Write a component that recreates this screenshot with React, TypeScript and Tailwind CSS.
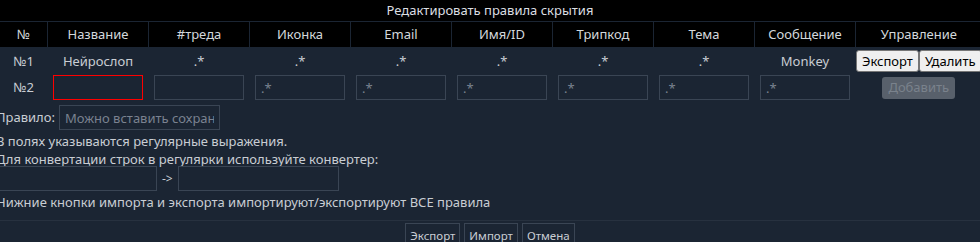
import React from "react";

const columns = ["Название", "#треда", "Иконка", "Email", "Имя/ID", "Трипкод", "Тема", "Сообщение"];

const savedRule = ["Нейрослоп", ".*", ".*", ".*", ".*", ".*", ".*", "Monkey"];

const newRule = ["", "", ".*", ".*", ".*", ".*", ".*", ".*"];

const font = { fontFamily: '"Noto Sans", "Open Sans", sans-serif' };

const inputGrey =
  "h-[25px] w-[90px] border border-solid border-[#3a4554] bg-transparent px-[5px] text-[13px] text-[#c9cdd3] placeholder:text-[#7a8290] outline-none";
const inputRed =
  "h-[25px] w-[90px] border border-solid border-[#ff0000] bg-transparent px-[5px] text-[13px] text-[#c9cdd3] placeholder:text-[#7a8290] outline-none";

const App = () => {
  return (
    <div
      className="h-[242px] w-[980px] overflow-hidden bg-[#1b2533] text-[13px] leading-[17px] text-[#c9cdd3]"
      style={font}
    >
      <div className="flex h-[21px] items-center justify-center bg-black text-[13px] text-[#dcdfe3]">
        Редактировать правила скрытия
      </div>

      <div className="mt-px grid grid-cols-[47px_repeat(8,100px)_1fr] gap-x-px">
        <div className="flex h-[25px] items-center justify-center bg-black text-[#d4d8dc]">№</div>
        {columns.map((c) => (
          <div key={c} className="flex h-[25px] items-center justify-center bg-black text-[#d4d8dc]">
            {c}
          </div>
        ))}
        <div className="flex h-[25px] items-center justify-center bg-black text-[#d4d8dc]">Управление</div>

        <div className="flex h-[28px] items-center justify-center">№1</div>
        {savedRule.map((v, i) => (
          <div key={i} className="flex h-[28px] items-center justify-center">
            {v}
          </div>
        ))}
        <div className="flex h-[28px] items-center justify-center">
          <button className="h-[22px] rounded-[3px] border border-[#767676] bg-[#efefef] px-[5px] text-[13px] text-black">
            Экспорт
          </button>
          <button className="h-[22px] rounded-[3px] border border-[#767676] bg-[#efefef] px-[5px] text-[13px] text-black">
            Удалить
          </button>
        </div>

        <div className="flex h-[25px] items-center justify-center">№2</div>
        {newRule.map((v, i) => (
          <div key={i} className="flex h-[25px] items-center justify-center">
            <input className={i === 0 ? inputRed : inputGrey} placeholder={v} />
          </div>
        ))}
        <div className="flex h-[25px] items-center justify-center">
          <button
            disabled
            className="h-[22px] rounded-[3px] bg-[#58606b] px-[6px] text-[13px] text-[#7a828c]"
          >
            Добавить
          </button>
        </div>
      </div>

      <div className="-ml-[4px]">
        <div className="mt-[5px] flex h-[25px] items-center gap-[4px]">
          <span>Правило:</span>
          <input
            className="h-[25px] w-[161px] border border-[#3a4554] bg-transparent px-[5px] text-[13px] placeholder:text-[#7a8290] outline-none"
            placeholder="Можно вставить сохранённое правило"
          />
        </div>
        <div className="mt-[3px]">В полях указываются регулярные выражения.</div>
        <div className="mt-px">Для конвертации строк в регулярки используйте конвертер:</div>
        <div className="-mt-[2px] flex h-[25px] items-center">
          <input className="h-[25px] w-[161px] border border-[#3a4554] bg-transparent outline-none" />
          <span className="px-[5px] text-[12px]">-&gt;</span>
          <input className="h-[25px] w-[161px] border border-[#3a4554] bg-transparent outline-none" />
        </div>
        <div className="mt-[3px]">Нижние кнопки импорта и экспорта импортируют/экспортируют ВСЕ правила</div>
      </div>

      <div className="mt-[9px] border-t border-[#27313f]" />
      <div className="mt-[2px] flex justify-center gap-[4px]">
        <button className="h-[24px] border border-[#3a4554] px-[4px] text-[11.5px] text-[#c9cdd3]">Экспорт</button>
        <button className="h-[24px] border border-[#3a4554] px-[4px] text-[11.5px] text-[#c9cdd3]">Импорт</button>
        <button className="h-[24px] border border-[#3a4554] px-[4px] text-[11.5px] text-[#c9cdd3]">Отмена</button>
      </div>
    </div>
  );
};

export default App;
